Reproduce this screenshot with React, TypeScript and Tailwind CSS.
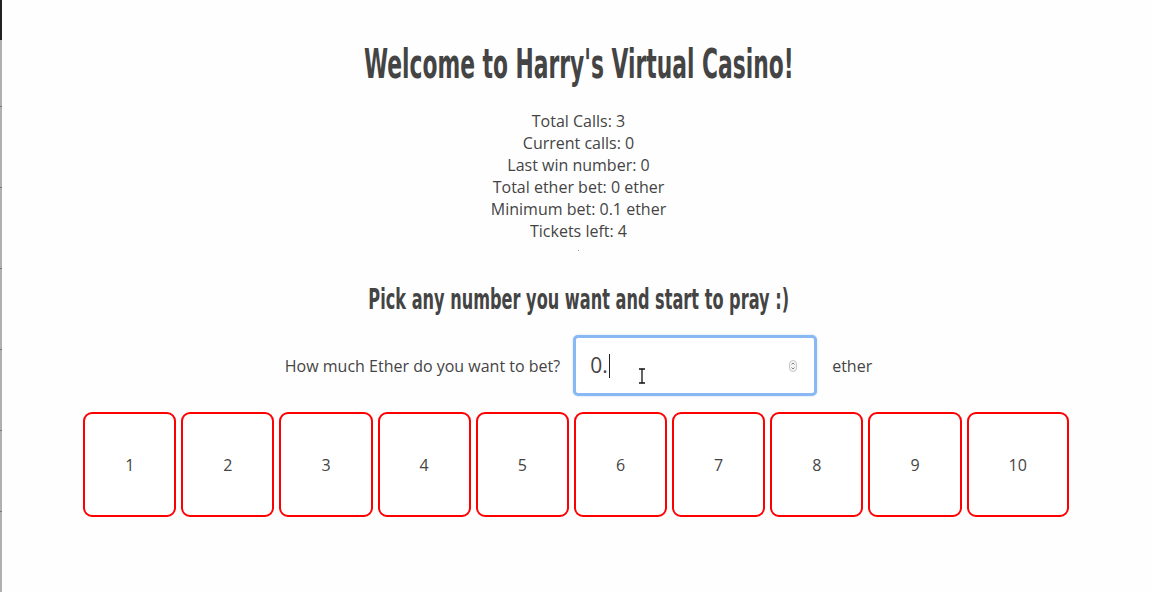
import React from 'react';

const stats = [
  'Total Calls: 3',
  'Current calls: 0',
  'Last win number: 0',
  'Total ether bet: 0 ether',
  'Minimum bet: 0.1 ether',
  'Tickets left: 4',
];

const numbers = [1, 2, 3, 4, 5, 6, 7, 8, 9, 10];

const headFont = { fontFamily: '"DejaVu Sans", sans-serif' };

const App: React.FC = () => {
  return (
    <div
      className="flex h-[592px] w-[1152px] overflow-hidden bg-[#fefefe] text-[#444]"
      style={{ fontFamily: '"Open Sans", sans-serif' }}
    >
      {/* edge of the window behind */}
      <div className="flex w-[2px] shrink-0 flex-col">
        <div className="h-[43px] bg-[#222]" />
        <div className="flex flex-1 flex-col bg-[#b0b0b0] pt-[66px]">
          {[0, 1, 2, 3, 4, 5].map((i) => (
            <div key={i} className="mb-[80px] h-px bg-[#777]" />
          ))}
        </div>
      </div>

      <div className="flex flex-1 flex-col items-center pl-[5px] pr-[2px]">
        <h1
          className="mt-[40px] scale-x-[0.532] whitespace-nowrap text-[41px] font-bold leading-[48px] text-[#444]"
          style={headFont}
        >
          Welcome to Harry's Virtual Casino!
        </h1>

        <div className="mt-[22px] flex flex-col items-center text-[16px] leading-[22px] text-[#444]">
          {stats.map((s) => (
            <div key={s}>{s}</div>
          ))}
          <div className="mt-[8px] h-px w-px bg-[#999]" />
        </div>

        <h2
          className="mt-[31px] scale-x-[0.557] whitespace-nowrap text-[29px] font-bold leading-[34px] text-[#444]"
          style={headFont}
        >
          Pick any number you want and start to pray :)
        </h2>

        <div className="mt-[19px] flex items-center">
          <span className="text-[16px] text-[#444]">How much Ether do you want to bet?</span>
          <div className="relative ml-[13px] flex h-[61px] w-[244px] items-center rounded-[5px] border-[3px] border-[#8ab8f2] bg-white pl-[14px] pr-[17px] shadow-[0_0_2px_#b7d4f7]">
            <span className="text-[21px] text-[#444]">0.</span>
            <span className="ml-px h-[24px] w-px bg-[#222]" />
            <svg className="absolute left-[62px] top-[30px]" width="8" height="16" viewBox="0 0 8 16">
              <path d="M1 1h6M4 1v14M1 15h6" stroke="#111" strokeWidth="1.3" fill="none" />
            </svg>
            <svg className="ml-auto" width="8" height="12" viewBox="0 0 8 12">
              <rect x="0.5" y="0.5" width="7" height="11" rx="3.5" fill="#f4f4f4" stroke="#bbb" strokeWidth="0.8" />
              <path d="M2.5 4.5L4 3l1.5 1.5M2.5 7.5L4 9l1.5-1.5" stroke="#666" strokeWidth="0.8" fill="none" />
            </svg>
          </div>
          <span className="ml-[15px] text-[16px] text-[#444]">ether</span>
        </div>

        <div className="mr-[5px] mt-[16px] flex gap-[5px]">
          {numbers.map((n) => (
            <div
              key={n}
              className="flex h-[105px] items-center justify-center rounded-[9px] border-2 border-[#f00] bg-white px-[40px] text-[16px] text-[#444]"
            >
              {n}
            </div>
          ))}
        </div>
      </div>
    </div>
  );
};

export default App;
